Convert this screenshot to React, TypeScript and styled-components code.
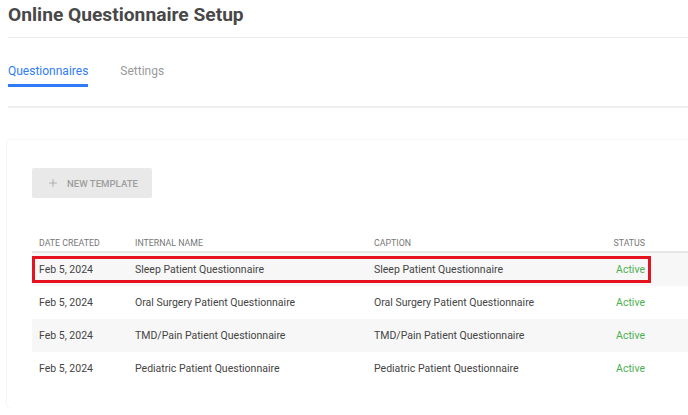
import styled, { createGlobalStyle } from "styled-components";
import { Plus } from "lucide-react";

const rows = [
  { date: "Feb 5, 2024", name: "Sleep Patient Questionnaire", caption: "Sleep Patient Questionnaire", status: "Active", marked: true },
  { date: "Feb 5, 2024", name: "Oral Surgery Patient Questionnaire", caption: "Oral Surgery Patient Questionnaire", status: "Active" },
  { date: "Feb 5, 2024", name: "TMD/Pain Patient Questionnaire", caption: "TMD/Pain Patient Questionnaire", status: "Active" },
  { date: "Feb 5, 2024", name: "Pediatric Patient Questionnaire", caption: "Pediatric Patient Questionnaire", status: "Active" },
];

const App = () => {
  return (
    <>
      <GlobalStyle />
      <Page>
        <Title>Online Questionnaire Setup</Title>

        <Tabs>
          <Tab $active>Questionnaires</Tab>
          <Tab>Settings</Tab>
        </Tabs>

        <Card>
          <NewButton>
            <Plus size={12} strokeWidth={1.5} />
            New Template
          </NewButton>

          <Table>
            <HeadRow>
              <HeadCell>Date Created</HeadCell>
              <HeadCell>Internal Name</HeadCell>
              <HeadCell>Caption</HeadCell>
              <HeadCell $right>Status</HeadCell>
            </HeadRow>

            {rows.map((row, i) => (
              <Row key={i} $striped={i % 2 === 0}>
                <Cell>{row.date}</Cell>
                <Cell>{row.name}</Cell>
                <Cell>{row.caption}</Cell>
                <Status>{row.status}</Status>
                {row.marked && <Highlight />}
              </Row>
            ))}
          </Table>
        </Card>
      </Page>
    </>
  );
};

const GlobalStyle = createGlobalStyle`
  body {
    margin: 0;
    background: #fff;
    font-family: Roboto, "Liberation Sans", sans-serif;
    overflow: hidden;
  }
`;

const Page = styled.div`
  padding-left: 8px;
  width: 760px;
`;

const Title = styled.h1`
  margin: 0;
  height: 37px;
  line-height: 30px;
  font-size: 19.2px;
  font-weight: 700;
  color: #484848;
  border-bottom: 1px solid #ececec;
`;

const Tabs = styled.nav`
  display: flex;
  gap: 32px;
  padding-top: 20px;
  padding-bottom: 19px;
  border-bottom: 2px solid #efefef;
`;

const Tab = styled.div<{ $active?: boolean }>`
  height: 26px;
  line-height: 26px;
  font-size: 12px;
  color: ${(p) => (p.$active ? "#2f7cf6" : "#9a9a9a")};
  border-bottom: 3px solid ${(p) => (p.$active ? "#2f7cf6" : "transparent")};
  cursor: pointer;
`;

const Card = styled.section`
  margin-top: 32px;
  margin-left: -1px;
  padding: 28px 0 23px 25px;
  border-radius: 4px;
  box-shadow: 0 0 2px rgba(0, 0, 0, 0.14);
`;

const NewButton = styled.button`
  display: flex;
  align-items: center;
  gap: 8px;
  width: 120px;
  height: 30px;
  padding: 0 0 0 15px;
  border: none;
  border-radius: 2px;
  background: #e9e9e9;
  color: #9e9e9e;
  font-family: Roboto, "Liberation Sans", sans-serif;
  font-size: 9.6px;
  font-weight: 500;
  text-transform: uppercase;
`;

const Table = styled.div`
  margin-top: 37px;
`;

const columns = "96px 239px 231px 40px 1fr";

const HeadRow = styled.div`
  display: grid;
  grid-template-columns: ${columns};
  padding: 0 0 2px 7px;
  box-sizing: border-box;
  height: 18px;
  align-items: end;
  border-bottom: 2px solid #e6e6e6;
`;

const HeadCell = styled.div<{ $right?: boolean }>`
  font-size: 8.8px;
  line-height: 12px;
  color: #777;
  text-transform: uppercase;
  text-align: ${(p) => (p.$right ? "right" : "left")};
`;

const Row = styled.div<{ $striped?: boolean }>`
  position: relative;
  display: grid;
  grid-template-columns: ${columns};
  padding-left: 7px;
  height: 33px;
  align-items: center;
  background: ${(p) => (p.$striped ? "#f7f7f7" : "#fff")};
`;

const Cell = styled.div`
  font-size: 10.5px;
  color: #444;
  white-space: nowrap;
`;

const Status = styled(Cell)`
  text-align: right;
  color: #4caf50;
`;

const Highlight = styled.div`
  position: absolute;
  left: 0;
  top: 3px;
  width: 619px;
  height: 27px;
  box-sizing: border-box;
  border: 3px solid #e5121f;
  pointer-events: none;
`;

export default App;
